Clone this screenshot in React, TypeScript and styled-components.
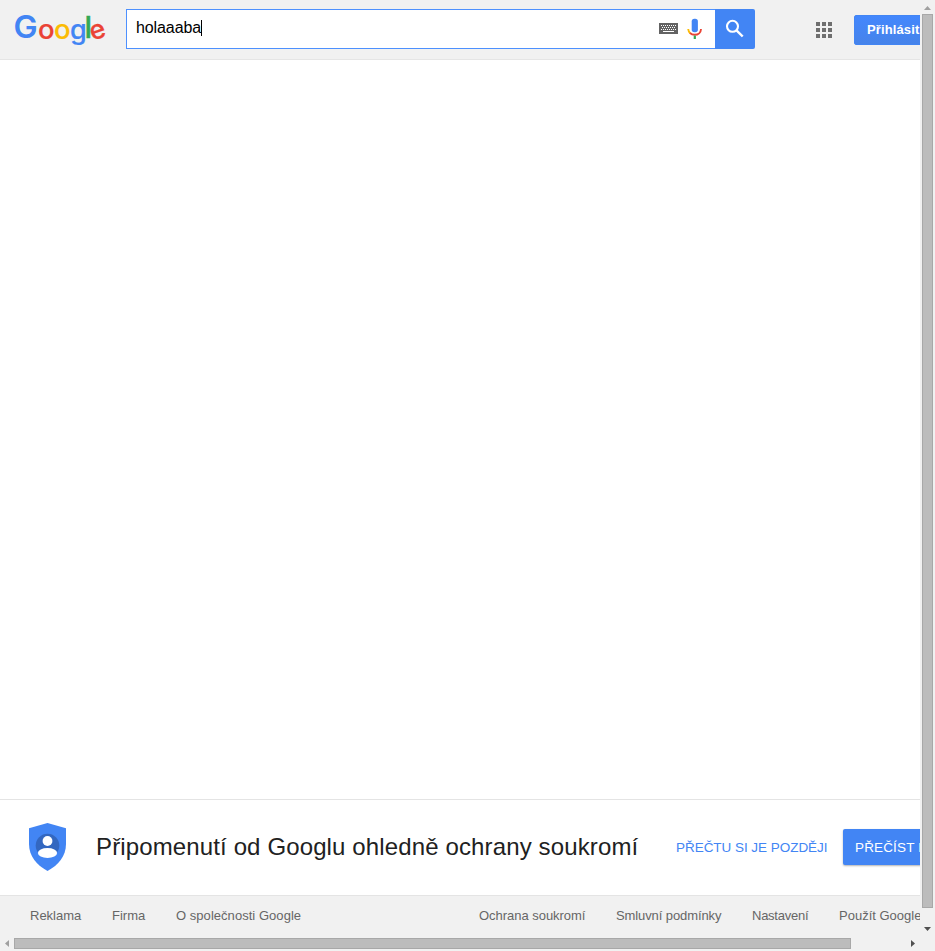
import React from "react";
import styled, { createGlobalStyle } from "styled-components";

const GlobalStyle = createGlobalStyle`
  *, *::before, *::after { box-sizing: border-box; }
  html, body { margin: 0; padding: 0; overflow: hidden; background: #fff; }
  body { font-family: "Liberation Sans", Arial, sans-serif; }
`;

const Window = styled.div`
  display: grid;
  grid-template-columns: 920px 15px;
  grid-template-rows: 936px 15px;
  width: 935px;
  height: 951px;
  overflow: hidden;
  background: #f1f1f1;
`;

const Viewport = styled.div`
  display: flex;
  flex-direction: column;
  width: 920px;
  height: 936px;
  overflow: hidden;
  background: #fff;
  white-space: nowrap;
`;

const Header = styled.header`
  display: flex;
  flex: none;
  height: 60px;
  background: #f1f1f1;
  border-bottom: 1px solid #e5e5e5;
`;

const Logo = styled.svg`
  flex: none;
  width: 96px;
  height: 42px;
  margin: 9px 17px 0 13px;
  overflow: visible;
`;

const LogoLetter = styled.text<{ $weight: number; $size: number }>`
  font-family: Inter, sans-serif;
  font-weight: ${(p) => p.$weight};
  font-size: ${(p) => p.$size}px;
`;

const SearchForm = styled.div`
  display: flex;
  flex: none;
  width: 629px;
  height: 40px;
  margin-top: 9px;
`;

const SearchField = styled.div`
  display: flex;
  width: 589px;
  height: 40px;
  padding-left: 9px;
  background: #fff;
  border: 1px solid #4d90fe;
  border-right: 0;
`;

const Query = styled.span`
  height: 18px;
  margin-top: 9px;
  color: #000;
  font-size: 16px;
  line-height: 18px;
  letter-spacing: -0.1px;
`;

const Caret = styled.span`
  width: 1px;
  height: 16px;
  margin-top: 10px;
  background: #000;
`;

const KeyboardSvg = styled.svg`
  flex: none;
  width: 19px;
  height: 11px;
  margin: 13px 9px 0 auto;
`;

const MicSvg = styled.svg`
  flex: none;
  width: 15px;
  height: 22px;
  margin: 8px 13px 0 0;
`;

const SearchButton = styled.button`
  display: flex;
  width: 40px;
  height: 40px;
  padding: 10px 0 0 10px;
  border: 0;
  border-radius: 0 2px 2px 0;
  background: #4285f4;
`;

const AppsGrid = styled.div`
  display: grid;
  flex: none;
  grid-template-columns: repeat(3, 4px);
  grid-auto-rows: 4px;
  gap: 2px;
  margin: 22px 22px 0 61px;
`;

const AppsDot = styled.i`
  background: #6f6f6f;
`;

const SignIn = styled.a`
  flex: none;
  width: 98px;
  height: 30px;
  margin-top: 15px;
  padding-left: 12px;
  border: 1px solid #4285f4;
  border-radius: 2px;
  background: linear-gradient(#4387fd, #4683ea);
  color: #fff;
  font-size: 13px;
  font-weight: 700;
  line-height: 28px;
  letter-spacing: 0.12px;
`;

const Main = styled.main`
  flex: 1;
`;

const Reminder = styled.section`
  display: flex;
  flex: none;
  height: 96px;
  border-top: 1px solid #e4e4e4;
`;

const ShieldSvg = styled.svg`
  flex: none;
  width: 38px;
  height: 48px;
  margin: 23px 29px 0 29px;
`;

const Title = styled.h1`
  flex: none;
  width: 580px;
  margin: 0;
  color: #212121;
  font-size: 24px;
  font-weight: 400;
  line-height: 94px;
  letter-spacing: 0.13px;
`;

const LaterLink = styled.a`
  flex: none;
  width: 167px;
  color: #4285f4;
  font-size: 13.5px;
  line-height: 95px;
  letter-spacing: -0.04px;
`;

const ReadButton = styled.a`
  flex: none;
  width: 120px;
  height: 36px;
  margin-top: 29px;
  padding-left: 12px;
  border-radius: 2px;
  background: #4285f4;
  box-shadow: 0 1px 2px rgba(0, 0, 0, 0.3);
  color: #fff;
  font-size: 13.5px;
  line-height: 37px;
  letter-spacing: 0.15px;
`;

const Footer = styled.footer`
  display: flex;
  flex: none;
  height: 41px;
  padding-left: 30px;
  background: #f1f1f1;
  border-top: 1px solid #e4e4e4;
`;

const FooterLink = styled.a<{ $width: number; $spacing: number }>`
  flex: none;
  width: ${(p) => p.$width}px;
  color: #666;
  font-size: 13px;
  line-height: 40px;
  letter-spacing: ${(p) => p.$spacing}px;
`;

const VerticalBar = styled.div`
  display: flex;
  flex-direction: column;
  align-items: center;
  width: 15px;
  height: 936px;
  background: #f1f1f1;
`;

const HorizontalBar = styled.div`
  display: flex;
  align-items: center;
  width: 920px;
  height: 15px;
  background: #f1f1f1;
`;

const Thumb = styled.div<{ $w: number; $h: number }>`
  flex: none;
  width: ${(p) => p.$w}px;
  height: ${(p) => p.$h}px;
  border: 1px solid #a8a8a8;
  background: #bcbcbc;
`;

const ArrowBox = styled.svg<{ $w: number; $h: number }>`
  flex: none;
  width: ${(p) => p.$w}px;
  height: ${(p) => p.$h}px;
`;

const footerLinks: [string, number, number][] = [
  ["Reklama", 82, 0],
  ["Firma", 64, 0],
  ["O společnosti Google", 303, 0.04],
  ["Ochrana soukromí", 137, -0.03],
  ["Smluvní podmínky", 136, -0.1],
  ["Nastavení", 87, -0.25],
  ["Použít Google.com", 130, 0],
];

function GoogleLogo() {
  return (
    <Logo viewBox="0 0 96 42" role="img" aria-label="Google">
      <LogoLetter $size={31} $weight={600} transform="translate(.5 29.4) scale(1.04 1)" fill="#4285f4">G</LogoLetter>
      <LogoLetter $size={27.5} $weight={500} x="25" y="29.5" fill="#ea4335" stroke="#ea4335" strokeWidth=".2">o</LogoLetter>
      <LogoLetter $size={27.5} $weight={500} x="41" y="29.5" fill="#fbbc05" stroke="#fbbc05" strokeWidth=".2">o</LogoLetter>
      <LogoLetter $size={27} $weight={500} x="57" y="29.5" fill="#4285f4" stroke="#4285f4" strokeWidth=".2">g</LogoLetter>
      <LogoLetter $size={30} $weight={500} x="71.6" y="29" fill="#34a853" stroke="#34a853" strokeWidth=".4">l</LogoLetter>
      <LogoLetter $size={26.5} $weight={500} x="76.8" y="29.7" fill="#ea4335" stroke="#ea4335" strokeWidth=".3" transform="rotate(-18 85 22)">e</LogoLetter>
    </Logo>
  );
}

function KeyboardIcon() {
  return (
    <KeyboardSvg viewBox="0 0 19 11">
      <path fill="#636363" d="M0 0h19v11H0z" />
      <path stroke="#fff" strokeDasharray="1 1" d="M2 2.5h15M3 4.5h14M2 6.5h15" />
      <path stroke="#fff" d="M4 8.5h11" />
    </KeyboardSvg>
  );
}

function MicIcon() {
  return (
    <MicSvg viewBox="0 0 15 22">
      <rect x="4.7" y="0.8" width="6.2" height="13.4" rx="2.7" fill="#4285f4" />
      <path d="M1.2 11Q1.4 13.5 3.2 15.2" fill="none" stroke="#fbbc05" strokeWidth="1.9" />
      <path d="M3 15Q4.8 16.8 7.7 16.8C11.2 16.8 13.9 14.4 14 11" fill="none" stroke="#ea4335" strokeWidth="1.9" />
      <path d="M6.7 17.6h2.2V21H6.7z" fill="#34a853" />
    </MicSvg>
  );
}

function ShieldIcon() {
  return (
    <ShieldSvg viewBox="0 0 38 48">
      <path fill="#4285f4" d="M18.5 0 37 5.3V21C37 33 29.5 42 18.5 48 7.5 42 0 33 0 21V5.3Z" />
      <circle cx="18.5" cy="22.5" r="11.8" fill="#3367c0" />
      <circle cx="18.5" cy="18" r="4.9" fill="#fff" />
      <ellipse cx="18.5" cy="30" rx="9.6" ry="4.9" fill="#fff" />
    </ShieldSvg>
  );
}

export default function App() {
  return (
    <>
      <GlobalStyle />
      <Window>
        <Viewport>
          <Header>
            <GoogleLogo />
            <SearchForm>
              <SearchField>
                <Query>holaaaba</Query>
                <Caret />
                <KeyboardIcon />
                <MicIcon />
              </SearchField>
              <SearchButton aria-label="Hledat">
                <svg width="20" height="20" viewBox="0 0 20 20" fill="none" stroke="#fff">
                  <circle cx="7.5" cy="7.3" r="5.5" strokeWidth="2.1" />
                  <path d="m11.5 11.3 6.2 6.2" strokeWidth="2.4" />
                </svg>
              </SearchButton>
            </SearchForm>
            <AppsGrid>
              {Array.from({ length: 9 }, (_, i) => <AppsDot key={i} />)}
            </AppsGrid>
            <SignIn>Přihlásit se</SignIn>
          </Header>
          <Main />
          <Reminder>
            <ShieldIcon />
            <Title>Připomenutí od Googlu ohledně ochrany soukromí</Title>
            <LaterLink>PŘEČTU SI JE POZDĚJI</LaterLink>
            <ReadButton>PŘEČÍST NYNÍ</ReadButton>
          </Reminder>
          <Footer>
            {footerLinks.map(([label, width, spacing]) => (
              <FooterLink key={label} $width={width} $spacing={spacing}>{label}</FooterLink>
            ))}
          </Footer>
        </Viewport>
        <VerticalBar>
          <ArrowBox $w={15} $h={14} viewBox="0 0 15 14"><path fill="#a0a0a0" d="M4 10h7L7.5 6z" /></ArrowBox>
          <Thumb $w={11} $h={894} />
          <ArrowBox $w={15} $h={28} viewBox="0 0 15 28"><path fill="#505050" d="M4 19h7l-3.5 4z" /></ArrowBox>
        </VerticalBar>
        <HorizontalBar>
          <ArrowBox $w={14} $h={15} viewBox="0 0 14 15"><path fill="#a0a0a0" d="M9 4v7L5 7.5z" /></ArrowBox>
          <Thumb $w={837} $h={11} />
          <ArrowBox $w={69} $h={15} viewBox="0 0 69 15"><path fill="#505050" d="M60 4v7l4-3.5z" /></ArrowBox>
        </HorizontalBar>
      </Window>
    </>
  );
}
